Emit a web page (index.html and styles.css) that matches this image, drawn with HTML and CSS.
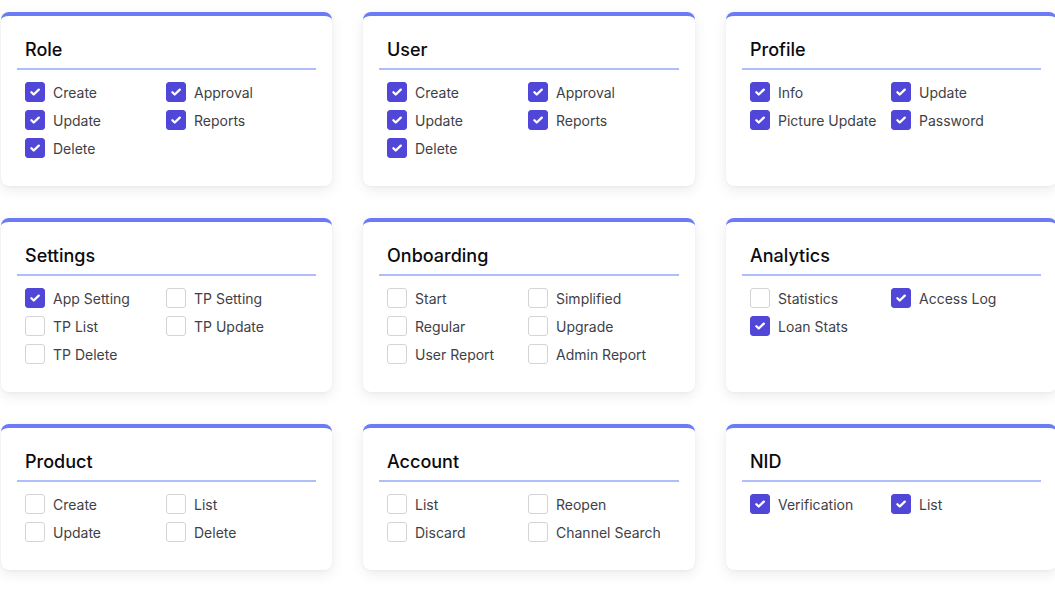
FILE: index.html
```html
<!DOCTYPE html>
<html>
<head>
<meta charset="utf-8">
<link rel="stylesheet" href="styles.css">
</head>
<body>
<div class="grid">
  <div class="card">
    <h3 class="title">Role</h3>
    <div class="items">
      <label class="item"><span class="box on"><svg viewBox="0 0 20 20"><path d="M6 10.3l2.6 2.5L14.2 7.4"/></svg></span>Create</label>
      <label class="item"><span class="box on"><svg viewBox="0 0 20 20"><path d="M6 10.3l2.6 2.5L14.2 7.4"/></svg></span>Approval</label>
      <label class="item"><span class="box on"><svg viewBox="0 0 20 20"><path d="M6 10.3l2.6 2.5L14.2 7.4"/></svg></span>Update</label>
      <label class="item"><span class="box on"><svg viewBox="0 0 20 20"><path d="M6 10.3l2.6 2.5L14.2 7.4"/></svg></span>Reports</label>
      <label class="item"><span class="box on"><svg viewBox="0 0 20 20"><path d="M6 10.3l2.6 2.5L14.2 7.4"/></svg></span>Delete</label>
    </div>
  </div>
  <div class="card">
    <h3 class="title">User</h3>
    <div class="items">
      <label class="item"><span class="box on"><svg viewBox="0 0 20 20"><path d="M6 10.3l2.6 2.5L14.2 7.4"/></svg></span>Create</label>
      <label class="item"><span class="box on"><svg viewBox="0 0 20 20"><path d="M6 10.3l2.6 2.5L14.2 7.4"/></svg></span>Approval</label>
      <label class="item"><span class="box on"><svg viewBox="0 0 20 20"><path d="M6 10.3l2.6 2.5L14.2 7.4"/></svg></span>Update</label>
      <label class="item"><span class="box on"><svg viewBox="0 0 20 20"><path d="M6 10.3l2.6 2.5L14.2 7.4"/></svg></span>Reports</label>
      <label class="item"><span class="box on"><svg viewBox="0 0 20 20"><path d="M6 10.3l2.6 2.5L14.2 7.4"/></svg></span>Delete</label>
    </div>
  </div>
  <div class="card">
    <h3 class="title">Profile</h3>
    <div class="items">
      <label class="item"><span class="box on"><svg viewBox="0 0 20 20"><path d="M6 10.3l2.6 2.5L14.2 7.4"/></svg></span>Info</label>
      <label class="item"><span class="box on"><svg viewBox="0 0 20 20"><path d="M6 10.3l2.6 2.5L14.2 7.4"/></svg></span>Update</label>
      <label class="item"><span class="box on"><svg viewBox="0 0 20 20"><path d="M6 10.3l2.6 2.5L14.2 7.4"/></svg></span>Picture Update</label>
      <label class="item"><span class="box on"><svg viewBox="0 0 20 20"><path d="M6 10.3l2.6 2.5L14.2 7.4"/></svg></span>Password</label>
    </div>
  </div>

  <div class="card">
    <h3 class="title">Settings</h3>
    <div class="items">
      <label class="item"><span class="box on"><svg viewBox="0 0 20 20"><path d="M6 10.3l2.6 2.5L14.2 7.4"/></svg></span>App Setting</label>
      <label class="item"><span class="box"></span>TP Setting</label>
      <label class="item"><span class="box"></span>TP List</label>
      <label class="item"><span class="box"></span>TP Update</label>
      <label class="item"><span class="box"></span>TP Delete</label>
    </div>
  </div>
  <div class="card">
    <h3 class="title">Onboarding</h3>
    <div class="items">
      <label class="item"><span class="box"></span>Start</label>
      <label class="item"><span class="box"></span>Simplified</label>
      <label class="item"><span class="box"></span>Regular</label>
      <label class="item"><span class="box"></span>Upgrade</label>
      <label class="item"><span class="box"></span>User Report</label>
      <label class="item"><span class="box"></span>Admin Report</label>
    </div>
  </div>
  <div class="card">
    <h3 class="title">Analytics</h3>
    <div class="items">
      <label class="item"><span class="box"></span>Statistics</label>
      <label class="item"><span class="box on"><svg viewBox="0 0 20 20"><path d="M6 10.3l2.6 2.5L14.2 7.4"/></svg></span>Access Log</label>
      <label class="item"><span class="box on"><svg viewBox="0 0 20 20"><path d="M6 10.3l2.6 2.5L14.2 7.4"/></svg></span>Loan Stats</label>
    </div>
  </div>

  <div class="card">
    <h3 class="title">Product</h3>
    <div class="items">
      <label class="item"><span class="box"></span>Create</label>
      <label class="item"><span class="box"></span>List</label>
      <label class="item"><span class="box"></span>Update</label>
      <label class="item"><span class="box"></span>Delete</label>
    </div>
  </div>
  <div class="card">
    <h3 class="title">Account</h3>
    <div class="items">
      <label class="item"><span class="box"></span>List</label>
      <label class="item"><span class="box"></span>Reopen</label>
      <label class="item"><span class="box"></span>Discard</label>
      <label class="item"><span class="box"></span>Channel Search</label>
    </div>
  </div>
  <div class="card">
    <h3 class="title">NID</h3>
    <div class="items">
      <label class="item"><span class="box on"><svg viewBox="0 0 20 20"><path d="M6 10.3l2.6 2.5L14.2 7.4"/></svg></span>Verification</label>
      <label class="item"><span class="box on"><svg viewBox="0 0 20 20"><path d="M6 10.3l2.6 2.5L14.2 7.4"/></svg></span>List</label>
    </div>
  </div>
</div>
</body>
</html>
```

FILE: styles.css
```css
* { box-sizing: border-box; }
html { overflow: hidden; background: #ffffff; }
body {
  margin: 0;
  min-height: 598px;
  font-family: Inter, "Noto Sans", sans-serif;
}
.grid {
  display: grid;
  grid-template-columns: 331px 332px 331px;
  column-gap: 31px;
  row-gap: 32px;
  padding: 12px 0 0 1px;
  width: 1100px;
}
.card {
  background: #fff;
  border-top: 4px solid #6b7bf5;
  border-radius: 8px;
  box-shadow: 0 4px 14px rgba(0, 0, 0, 0.08), 0 1px 3px rgba(0, 0, 0, 0.04);
  padding: 20px 16px 28px;
}
.title {
  margin: 0;
  padding: 0 8px 4px;
  font-size: 18px;
  line-height: 28px;
  font-weight: 500;
  color: #0b0b0f;
  border-bottom: 2px solid #b0bdfb;
}
.items {
  margin-top: 12px;
  padding: 0 8px;
  display: grid;
  grid-template-columns: 141px 1fr;
  row-gap: 8px;
}
.item {
  display: flex;
  align-items: center;
  gap: 8px;
  height: 20px;
  font-size: 14px;
  color: #3f3f46;
  white-space: nowrap;
}
.box {
  width: 20px;
  height: 20px;
  flex: none;
  border: 1px solid #d4d4d8;
  border-radius: 3px;
  background: #fff;
  display: flex;
}
.box.on {
  background: #5046d8;
  border-color: #5046d8;
}
.box svg {
  width: 18px;
  height: 18px;
  fill: none;
  stroke: #fff;
  stroke-width: 2.6;
  stroke-linecap: round;
  stroke-linejoin: round;
}
```
